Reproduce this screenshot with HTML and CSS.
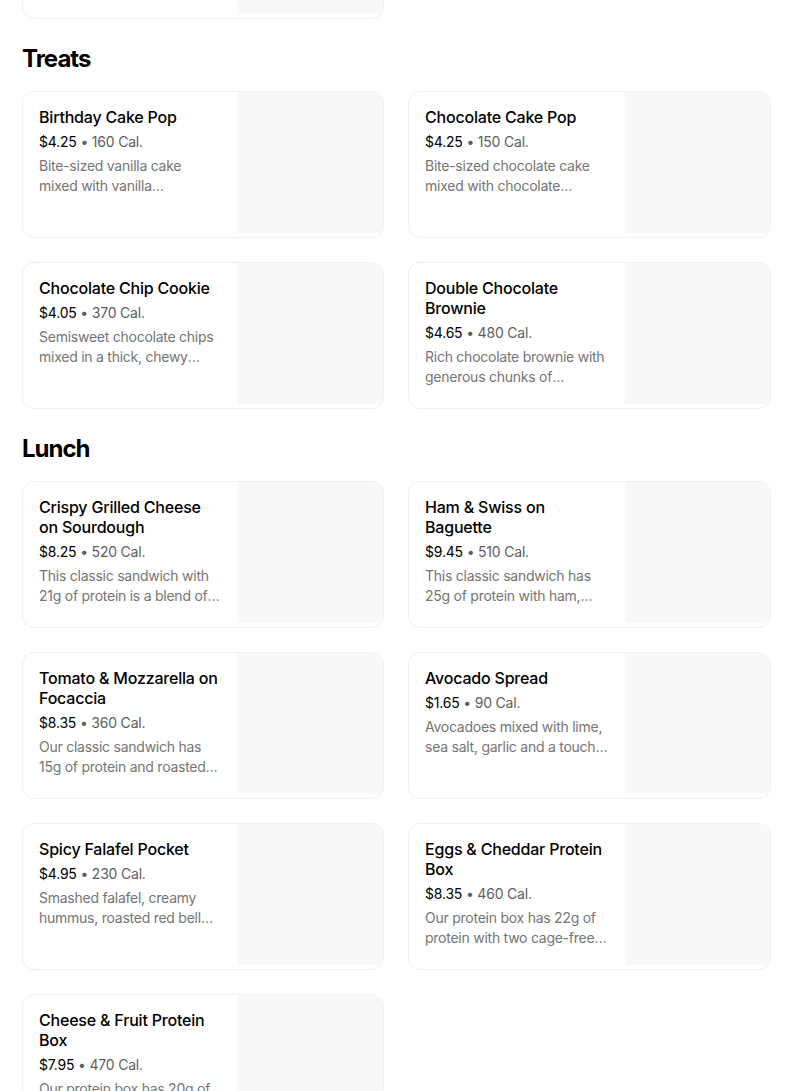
FILE: index.html
```html
<!DOCTYPE html>
<html>
<head>
<meta charset="utf-8">
<link rel="stylesheet" href="styles.css">
</head>
<body>
<div class="menu">
  <section class="section section-prev">
    <div class="grid">
      <div class="card">
        <div class="info"></div>
        <div class="thumb"></div>
      </div>
    </div>
  </section>

  <section class="section">
    <h2 class="heading">Treats</h2>
    <div class="grid">
      <div class="card">
        <div class="info">
          <div class="title">Birthday Cake Pop</div>
          <div class="meta"><span class="price">$4.25</span> • 160 Cal.</div>
          <div class="desc">Bite-sized vanilla cake mixed with vanilla buttercream, dipped in pink chocolaty icing.</div>
        </div>
        <div class="thumb"></div>
      </div>
      <div class="card">
        <div class="info">
          <div class="title">Chocolate Cake Pop</div>
          <div class="meta"><span class="price">$4.25</span> • 150 Cal.</div>
          <div class="desc">Bite-sized chocolate cake mixed with chocolate buttercream, dipped in chocolaty icing.</div>
        </div>
        <div class="thumb"></div>
      </div>
      <div class="card">
        <div class="info">
          <div class="title">Chocolate Chip Cookie</div>
          <div class="meta"><span class="price">$4.05</span> • 370 Cal.</div>
          <div class="desc">Semisweet chocolate chips mixed in a thick, chewy cookie baked to perfection.</div>
        </div>
        <div class="thumb"></div>
      </div>
      <div class="card">
        <div class="info">
          <div class="title">Double Chocolate Brownie</div>
          <div class="meta"><span class="price">$4.65</span> • 480 Cal.</div>
          <div class="desc">Rich chocolate brownie with generous chunks of chocolate throughout.</div>
        </div>
        <div class="thumb"></div>
      </div>
    </div>
  </section>

  <section class="section">
    <h2 class="heading">Lunch</h2>
    <div class="grid">
      <div class="card">
        <div class="info">
          <div class="title">Crispy Grilled Cheese on Sourdough</div>
          <div class="meta"><span class="price">$8.25</span> • 520 Cal.</div>
          <div class="desc">This classic sandwich with 21g of protein is a blend of white Cheddar and mozzarella cheeses.</div>
        </div>
        <div class="thumb"></div>
      </div>
      <div class="card">
        <div class="info">
          <div class="title">Ham &amp; Swiss on Baguette</div>
          <div class="meta"><span class="price">$9.45</span> • 510 Cal.</div>
          <div class="desc">This classic sandwich has 25g of protein with ham, Swiss cheese and butter on a baguette.</div>
        </div>
        <div class="thumb"></div>
      </div>
      <div class="card">
        <div class="info">
          <div class="title">Tomato &amp; Mozzarella on Focaccia</div>
          <div class="meta"><span class="price">$8.35</span> • 360 Cal.</div>
          <div class="desc">Our classic sandwich has 15g of protein and roasted tomatoes, mozzarella and spinach.</div>
        </div>
        <div class="thumb"></div>
      </div>
      <div class="card">
        <div class="info">
          <div class="title">Avocado Spread</div>
          <div class="meta"><span class="price">$1.65</span> • 90 Cal.</div>
          <div class="desc">Avocadoes mixed with lime, sea salt, garlic and a touch of jalapeño.</div>
        </div>
        <div class="thumb"></div>
      </div>
      <div class="card">
        <div class="info">
          <div class="title">Spicy Falafel Pocket</div>
          <div class="meta"><span class="price">$4.95</span> • 230 Cal.</div>
          <div class="desc">Smashed falafel, creamy hummus, roasted red bell peppers and spicy harissa in a pita.</div>
        </div>
        <div class="thumb"></div>
      </div>
      <div class="card">
        <div class="info">
          <div class="title">Eggs &amp; Cheddar Protein Box</div>
          <div class="meta"><span class="price">$8.35</span> • 460 Cal.</div>
          <div class="desc">Our protein box has 22g of protein with two cage-free eggs, Cheddar cheese and fruit.</div>
        </div>
        <div class="thumb"></div>
      </div>
      <div class="card">
        <div class="info">
          <div class="title">Cheese &amp; Fruit Protein Box</div>
          <div class="meta"><span class="price">$7.95</span> • 470 Cal.</div>
          <div class="desc">Our protein box has 20g of protein with cheeses, apples, grapes and crackers.</div>
        </div>
        <div class="thumb"></div>
      </div>
    </div>
  </section>
</div>
</body>
</html>
```

FILE: styles.css
```css
* { box-sizing: border-box; }
html, body { margin: 0; padding: 0; background: #fff; }
body {
  font-family: Inter, "Liberation Sans", sans-serif;
  color: #000;
}
.menu {
  width: 771px;
  padding-left: 22px;
  margin-top: -128px;
}
.section-prev { margin-bottom: 24px; }
.heading {
  margin: 0 0 16px;
  font-size: 24px;
  line-height: 32px;
  font-weight: 700;
  letter-spacing: -1px;
}
.grid {
  display: grid;
  grid-template-columns: 362px 363px;
  column-gap: 24px;
  row-gap: 24px;
  margin-bottom: 24px;
}
.card {
  display: flex;
  height: 147px;
  border: 1px solid #f0f0f0;
  border-radius: 12px;
  overflow: hidden;
  background: #fff;
}
.info {
  flex: 1;
  min-width: 0;
  padding: 15px 16px 0 16px;
}
.thumb {
  width: 145px;
  flex: none;
  background: #f8f8f8;
  margin-bottom: 4px;
}
.title {
  font-size: 16px;
  line-height: 20px;
  font-weight: 500;
  letter-spacing: -0.2px;
}
.meta {
  margin-top: 5px;
  font-size: 14px;
  line-height: 20px;
  color: #5e5e5e;
  letter-spacing: -0.2px;
}
.price { color: #000; }
.desc {
  margin-top: 4px;
  font-size: 14px;
  line-height: 20px;
  color: #757575;
  letter-spacing: -0.25px;
  display: -webkit-box;
  -webkit-line-clamp: 2;
  -webkit-box-orient: vertical;
  overflow: hidden;
}
```
